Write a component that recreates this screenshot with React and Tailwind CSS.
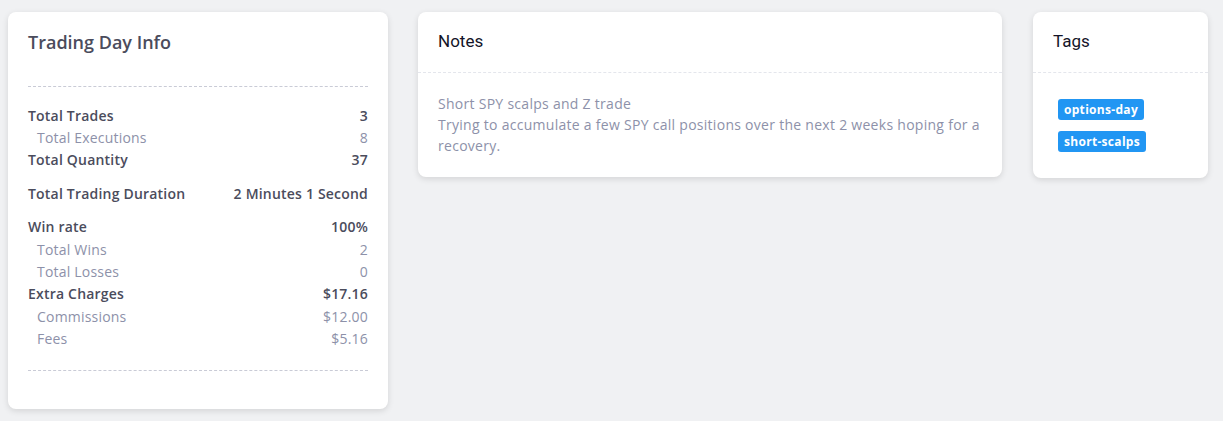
import React from "react";

const stats = [
  { label: "Total Trades", value: "3", main: true },
  { label: "Total Executions", value: "8" },
  { label: "Total Quantity", value: "37", main: true, gap: true },
  { label: "Total Trading Duration", value: "2 Minutes 1 Second", main: true, gap: true },
  { label: "Win rate", value: "100%", main: true },
  { label: "Total Wins", value: "2" },
  { label: "Total Losses", value: "0" },
  { label: "Extra Charges", value: "$17.16", main: true },
  { label: "Commissions", value: "$12.00" },
  { label: "Fees", value: "$5.16" },
];

function StatRow({ row }) {
  return (
    <div
      className={[
        "flex h-[22.4px] items-center justify-between",
        row.gap ? "mb-[11px]" : "",
        row.main ? "font-semibold text-[#4b4c5c]" : "pl-[9px] text-[#8d91a9]",
      ].join(" ")}
    >
      <span>{row.label}</span>
      <span>{row.value}</span>
    </div>
  );
}

function Card({ title, className, children }) {
  return (
    <div className={"rounded-lg bg-white shadow-[0_2px_6px_rgba(0,0,0,0.12)] " + className}>
      <div className="border-b border-dashed border-[#e4e6ec] px-5 pt-[18px] pb-[20px] font-['Roboto',sans-serif] text-[17px] leading-[22px] tracking-normal text-[#141428]">
        {title}
      </div>
      {children}
    </div>
  );
}

export default function App() {
  return (
    <div className="min-h-[421px] bg-[#f0f1f3] pt-3 pl-2 font-['Open_Sans',sans-serif] tracking-[0.2px]">
      <div className="flex items-start">
        <div className="w-[380px] rounded-lg bg-white px-5 shadow-[0_2px_6px_rgba(0,0,0,0.12)]">
          <div className="pt-[17px] text-[18px] leading-[26px] font-semibold tracking-normal text-[#4b4c5c]">
            Trading Day Info
          </div>
          <div className="mt-[31px] border-t border-dashed border-[#c9cbd6]" />
          <div className="pt-[17px] pb-[20px] text-[14px]">
            {stats.map((row) => (
              <StatRow key={row.label} row={row} />
            ))}
          </div>
          <div className="mb-[38px] border-t border-dashed border-[#c9cbd6]" />
        </div>

        <Card title="Notes" className="ml-[30px] w-[584px]">
          <div className="px-5 pt-[20px] pb-[21px] text-[14px] leading-[21px] tracking-[0.28px] text-[#8d91a9]">
            <div>Short SPY scalps and Z trade</div>
            <div>Trying to accumulate a few SPY call positions over the next 2 weeks hoping for a recovery.</div>
          </div>
        </Card>

        <Card title="Tags" className="ml-[31px] w-[175px]">
          <div className="flex flex-col items-start gap-[11px] pt-[26px] pb-[26px] pl-[25px]">
            <span className="rounded-[3px] bg-[#2196f3] px-[6px] text-[12px] leading-[21px] font-bold tracking-[0.3px] text-white">
              options-day
            </span>
            <span className="rounded-[3px] bg-[#2196f3] px-[6px] text-[12px] leading-[21px] font-bold tracking-[0.3px] text-white">
              short-scalps
            </span>
          </div>
        </Card>
      </div>
    </div>
  );
}
